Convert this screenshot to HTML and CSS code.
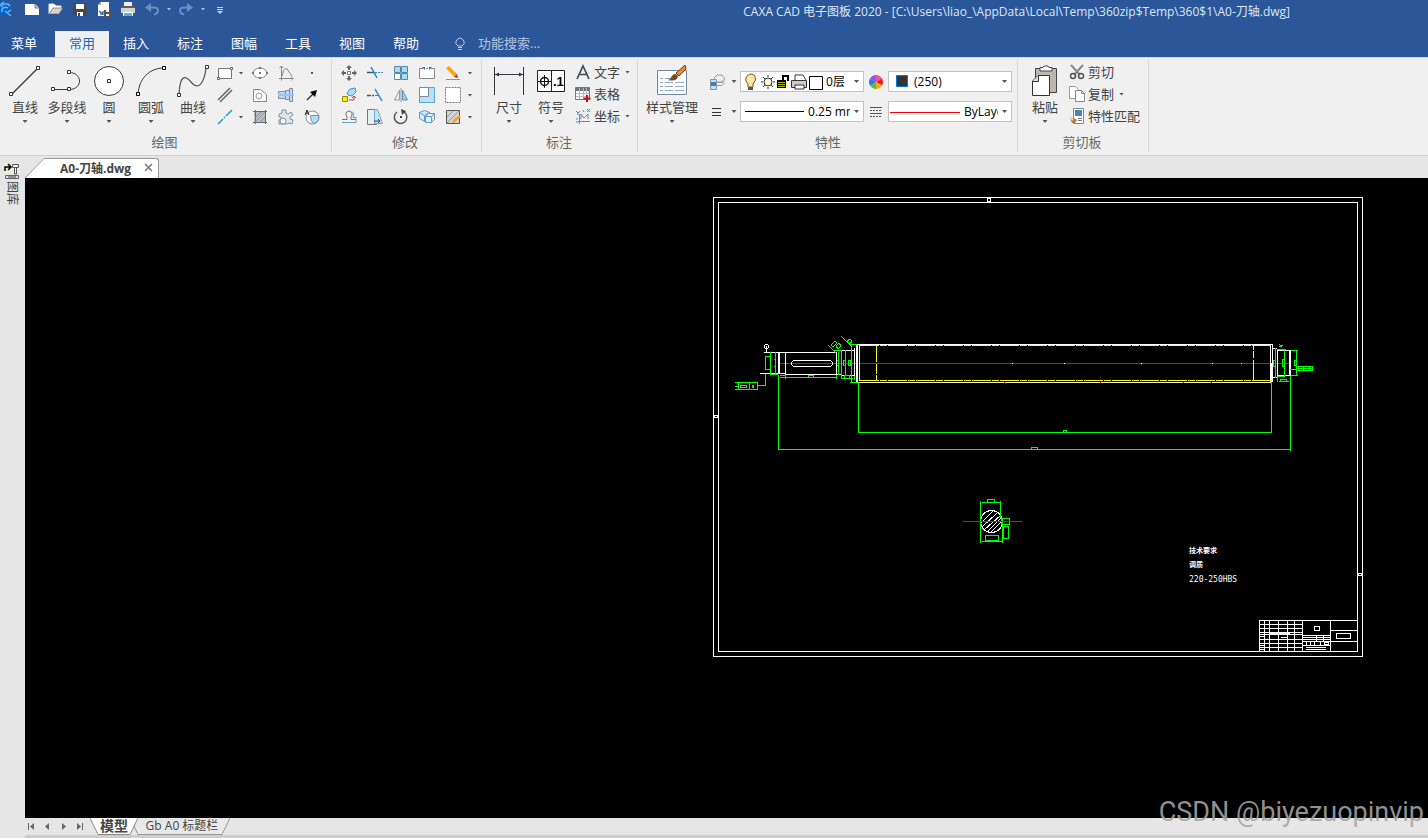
FILE: index.html
```html
<!DOCTYPE html>
<html lang="zh-CN">
<head>
    <meta charset="UTF-8">
    <meta name="viewport" content="width=device-width, initial-scale=1.0">
    <title>CAXA CAD 电子图板 2020</title>
    <link rel="stylesheet" href="styles.css">
</head>
<body>
    <header class="top">
        <div class="titlebar">
            <div class="quick">
                <svg class="logo" width="12" height="18" viewBox="0 0 12 18"><path d="M0 3l3-1 5 1 3 3-1 6-4 3H0z" fill="#0c62c4"/><path d="M1 7c2-4 7-4 9-1M2 12c-1-4 3-6 6-4M5 11l6 5M0 5l4-3M8 12l3-2" stroke="#5fb8ff" stroke-width="1.5" fill="none"/></svg>
                <button class="q q-new" aria-label="新建"><svg width="16" height="16"><path d="M1 3h10l4 4v7H1z" fill="#fff"/><path d="M11 3v4h4" fill="#ccc" stroke="#777"/></svg></button>
                <button class="q" aria-label="打开"><svg width="16" height="16"><path d="M1 13V3h5l2 2h5v3" fill="#fff" stroke="#eee"/><path d="M1 13l4-6h10l-4 6z" fill="#d8d4cc" stroke="#555" stroke-width=".6"/></svg></button>
                <button class="q" aria-label="保存"><svg width="16" height="16"><path d="M1 2h14v13H1z" fill="#46484c"/><path d="M4 3h8v5H4zM5 11h6v4H5z" fill="#fff"/><path d="M6 12h2v3H6z" fill="#444"/></svg></button>
                <button class="q" aria-label="另存"><svg width="16" height="16"><path d="M5 1h8v14H2V4z" fill="#fff"/><path d="M2 4l3-3v3z" fill="#aaa"/><path d="M3 10l4 3M4 13h3v-3" stroke="#2878bc" stroke-width="1.5" fill="none"/><path d="M8 9h7v7H8z" fill="#555"/><path d="M10 9h3v2h-3zM10 13h3v2h-3z" fill="#eee"/></svg></button>
                <button class="q" aria-label="打印"><svg width="16" height="16"><path d="M4 1h8v4H4z" fill="#eee"/><path d="M1 5h14v7H1z" fill="#5d5d5f"/><path d="M1 7h14v5H1z" fill="#d6d2ca"/><path d="M3 11h10v4H3z" fill="#fff"/><path d="M4 12h8v3H4z" fill="#3fbbe0"/></svg></button>
                <button class="q" aria-label="撤销"><svg width="16" height="16"><path d="M3 6.500h7q4 0 4 3t-4 4" stroke="#6d8fc2" stroke-width="2" fill="none"/><path d="M1 6.500L7 2v9z" fill="#6d8fc2"/></svg></button>
                <button class="drop light" aria-label="撤销列表"></button>
                <button class="q" aria-label="重做"><svg width="16" height="16"><path d="M13 6.500H6q-4 0-4 3t4 4" stroke="#6d8fc2" stroke-width="2" fill="none"/><path d="M15 6.500L9 2v9z" fill="#6d8fc2"/></svg></button>
                <button class="drop light" aria-label="重做列表"></button>
                <button class="q custom" aria-label="自定义"><svg width="16" height="16"><path d="M5 6.500h6M5 8.500h6" stroke="#ccd6e8"/><path d="M5 10h6l-3 3z" fill="#ccd6e8"/></svg></button>
            </div>
            <h1 class="title">CAXA CAD 电子图板 2020 - [C:\Users\liao_\AppData\Local\Temp\360zip$Temp\360$1\A0-刀轴.dwg]</h1>
        </div>
        <nav class="tabs">
            <button class="tab menu">菜单</button>
            <button class="tab active">常用</button>
            <button class="tab">插入</button>
            <button class="tab">标注</button>
            <button class="tab">图幅</button>
            <button class="tab">工具</button>
            <button class="tab">视图</button>
            <button class="tab">帮助</button>
            <label class="search"><svg width="12" height="14"><path d="M4 9Q1 7 2 4q2-3 4-3t4 3q1 3-2 5z" fill="none" stroke="#b9c8e2"/><path d="M4 10.500h4M4 12.500h4" stroke="#b9c8e2"/></svg><input type="text" placeholder="功能搜索..." aria-label="功能搜索"></label>
        </nav>
    </header>

    <section class="ribbon">
        <div class="group">
            <div class="body">
                <button class="big"><svg width="32" height="32"><path d="M3 29L29 3" stroke="#3c4046" stroke-width="1.500"/><path d="M.5 27.500h3v3h-3zM27.500 1.500h3v3h-3z" fill="#fff" stroke="#333"/></svg><span>直线</span><i class="arrow"></i></button>
                <button class="big"><svg width="32" height="32"><path d="M3 24.500h15c14 0 14-17 0-17" stroke="#333845" fill="none"/><path d="M.5 22.500h3v3h-3zM16.500 22.500h3v3h-3zM16.500 5.500h3v3h-3z" fill="#fff" stroke="#333"/></svg><span>多段线</span><i class="arrow"></i></button>
                <button class="big"><svg width="32" height="32"><circle cx="16" cy="16" r="14.500" fill="#fff" stroke="#333845"/><path d="M14.500 14.500h3v3h-3z" fill="#fff" stroke="#333"/></svg><span>圆</span><i class="arrow"></i></button>
                <button class="big"><svg width="32" height="32"><path d="M3 29C4 14 14 3 29 3" stroke="#333845" fill="none"/><path d="M1.500 27.500h3v3h-3zM27.500 1.500h3v3h-3z" fill="#fff" stroke="#000"/></svg><span>圆弧</span><i class="arrow"></i></button>
                <button class="big"><svg width="32" height="32"><path d="M2 29C3 8 9 11 14 17C21 26 27 19 29 3" stroke="#555b63" stroke-width="1.300" fill="none"/><path d="M.5 28.500h3v3h-3zM28.500.5h3v3h-3z" fill="#fff" stroke="#333"/></svg><span>曲线</span><i class="arrow"></i></button>
                <div class="tools draw">
                    <button aria-label="矩形"><svg width="16" height="16"><path d="M1.500 3.500h13v10h-13z" fill="#fff" stroke="#777"/><path d="M.5 12.500h2v2h-2zM13.500 2.500h2v2h-2z" fill="#fff" stroke="#666"/></svg></button><button class="drop" aria-label="矩形选项"></button>
                    <button aria-label="椭圆"><svg width="16" height="16"><ellipse cx="8" cy="8" rx="7" ry="5" fill="#fff" stroke="#888"/><path d="M7 2h2v2H7zM7 12h2v2H7zM0 7h2v2H0zM14 7h2v2h-2zM7 7h2v2H7z" fill="#777"/></svg></button>
                    <button aria-label="公式曲线"><svg width="16" height="16"><path d="M3.500 1v14.500M1 13.500h14M1.500 3l2-2 2 2M13 11.500l2 2-2 2M4 11q3-13 7-4l3 4" fill="none" stroke="#888"/></svg></button>
                    <button aria-label="点"><svg width="16" height="16"><path d="M7 7h2v2H7z" fill="#555"/></svg></button>
                    <button aria-label="平行线"><svg width="16" height="16"><path d="M1 13L13 1M3 15L15 3" stroke="#666" stroke-width="1.500"/></svg></button><span></span>
                    <button aria-label="轮廓"><svg width="16" height="16"><path d="M1.500 14.500v-12h7l6 5v7z" fill="#fff" stroke="#888"/><circle cx="7" cy="9" r="3" fill="none" stroke="#999"/></svg></button>
                    <button aria-label="孔轴"><svg width="16" height="16"><path d="M.5 4.500h7v7h-7zM7.500 3.500h4v9h-4zM11.500 1.500h3v13h-3z" fill="#c5d5e6" stroke="#7a90a8"/><path d="M0 8h16" stroke="#eaf5ff" stroke-width="2"/><path d="M0 8h16" stroke="#369bdf"/></svg></button>
                    <button aria-label="箭头"><svg width="16" height="16"><path d="M3 13L9 7" stroke="#333" stroke-width="1.500"/><path d="M13 3l-2 7-5-5z"/></svg></button>
                    <button aria-label="中心线"><svg width="16" height="16"><path d="M1 15L6 10M7 9l1-1M9 7l6-6" stroke="#199ada" stroke-width="1.500"/></svg></button><button class="drop" aria-label="中心线选项"></button>
                    <button aria-label="剖面线"><svg width="16" height="16"><path d="M2 3h12v11H2z" fill="#b8bdc1"/><path d="M3.500 1v14M13.500 1v14M1 2.500h14M1 13.500h14" stroke="#606870"/><path d="M3 9l6-6M3 13L13 3M8 13l5-5" stroke="#8b9298" fill="none"/></svg></button>
                    <button aria-label="齿轮"><svg width="16" height="16"><path d="M4 1h4v3l2 1 3-2 2 3-3 2v2l3 1-1 4-3-1-2 1H1v-4l2-1v-2L1 8V5l3-1z" fill="#dbe6ed" stroke="#8291a0"/><circle cx="5" cy="12" r="3" fill="#fff" stroke="#8291a0"/></svg></button>
                    <button aria-label="局部放大"><svg width="16" height="16"><circle cx="8.500" cy="8.500" r="6.500" fill="#f9f9f9" stroke="#888"/><path d="M6.500 6.500h8q1 7-5 8-3-2-3-8z" fill="#aee0fa" stroke="#7890a0"/><path d="M1 6l2-5 2 5M2 4h2" fill="none" stroke="#222"/></svg></button>
                </div>
            </div>
            <div class="caption">绘图</div>
        </div>

        <div class="group modify-group">
            <div class="body">
                <div class="tools modify">
                    <button aria-label="平移"><svg width="16" height="16"><path d="M8 0l3 3H9v2H7V3H5zM8 16l3-3H9v-2H7v2H5zM0 8l3-3v2h2v2H3v2zM16 8l-3-3v2h-2v2h2v2z" fill="#666"/><path d="M6.500 6.500h3v3h-3z" fill="#fff" stroke="#777"/></svg></button>
                    <button aria-label="裁剪"><svg width="16" height="16"><path d="M0 7.500h7" stroke="#555" stroke-width="1.500"/><path d="M8 7.500h8" stroke="#2d8bd0" stroke-dasharray="2 1"/><path d="M4 2l6 11" stroke="#1685d1" stroke-width="1.500"/></svg></button>
                    <button aria-label="阵列"><svg width="16" height="16"><path d="M1.500 1.500h6v6h-6zM8.500 1.500h6v6h-6zM8.500 8.500h6v6h-6z" fill="#a5dcf7" stroke="#5b87a6"/><path d="M1.500 8.500h6v6h-6z" fill="#fff" stroke="#5b87a6"/></svg></button>
                    <button aria-label="打断"><svg width="16" height="16"><path d="M4 3.500H.5v10h15v-10H12M7 3.500h2" fill="#fff" stroke="#888"/><path d="M3 2h3v3zM13 2h-3v3z" fill="#1974b9"/></svg></button>
                    <button aria-label="删除"><svg width="16" height="16"><path d="M1 3l3-2 8 8-3 3z" fill="#f3a51d"/><path d="M9 12l3-3 1 4z" fill="#884a14"/><path d="M2 5l6 6" stroke="#fff0aa"/><path d="M1 14.500h14" stroke="#a58e80"/></svg></button><button class="drop" aria-label="删除选项"></button>
                    <button aria-label="复制对象"><svg width="16" height="16"><path d="M1.500 9.500h5v5h-5z" fill="#ffe900" stroke="#998c00"/><path d="M6 6l3-4 5-1 1 4-4 4-4-1z" fill="#abdafa" stroke="#4b91bf"/><path d="M8 13h5v-3M11 11l2-2 2 2" fill="none" stroke="#b34b44"/></svg></button>
                    <button aria-label="延伸"><svg width="16" height="16"><path d="M0 8.500h4M5 8.500h2" stroke="#555" stroke-width="1.500"/><path d="M8 8.500h4" stroke="#2584c3"/><path d="M8 2l7 12" stroke="#3b93cf" stroke-width="1.500"/></svg></button>
                    <button aria-label="镜像"><svg width="16" height="16"><path d="M6.500 3v10h-5z" fill="#eee" stroke="#999"/><path d="M9.500 3v10h5z" fill="#9ccfeb" stroke="#5f94b5"/><path d="M8 1v14" stroke="#999"/></svg></button>
                    <button aria-label="缩放"><svg width="16" height="16"><path d="M.5.5h15v15H.5z" fill="#b7e1f7" stroke="#5fa5cc"/><path d="M.5.5h9v9h-9z" fill="#fff" stroke="#888"/></svg></button>
                    <button aria-label="拉伸"><svg width="16" height="16"><path d="M.5.5h15v15H.5z" fill="#fff" stroke="#777" stroke-dasharray="2 1"/></svg></button><button class="drop" aria-label="拉伸选项"></button>
                    <button aria-label="等距线"><svg width="16" height="16"><path d="M1 10.500h5V8Q3 3 8 2q5 1 2 6v2.500h5" fill="none" stroke="#777"/><path d="M1 13.500h14V8.500h-3q2-4-1-6" fill="none" stroke="#65a0c8"/></svg></button>
                    <button aria-label="拔模"><svg width="16" height="16"><path d="M.5.500h9v15h-9z" fill="#e8edf0" stroke="#777"/><path d="M7.500.500h3l5 14h-8z" fill="#bde5fa" stroke="#74a9c7"/><path d="M7 12h6M11 10l2 2-2 2" fill="none" stroke="#444"/></svg></button>
                    <button aria-label="旋转"><svg width="16" height="16"><path d="M9 2a6.300 6.300 0 1 1-5 1" fill="none" stroke="#555" stroke-width="1.500"/><path d="M8 0l5 2-4 4z" fill="#444"/><circle cx="8" cy="8" r="1"/></svg></button>
                    <button aria-label="块"><svg width="16" height="16"><path d="M.5 3.500l5-2 5 2v6l-5 3-5-3z" fill="#d3edfb" stroke="#5a9dc4"/><path d="M.5 3.500l5 3 5-3M5.500 6.500v6" fill="none" stroke="#5a9dc4"/><path d="M6.500 7.500h6v6h-6zM6.500 7.500l3-3h6l-3 3M15.500 4.500v6l-3 3" fill="#def3fe" stroke="#5a9dc4"/></svg></button>
                    <button aria-label="填充编辑"><svg width="16" height="16"><path d="M1.500 1.500h13v13h-13z" fill="#d2d3d4" stroke="#555"/><path d="M2 8l6-6M2 14L14 2M8 14l6-6" stroke="#999"/><path d="M8 11l6-5 2 2-6 5-3 1z" fill="#efa52b"/></svg></button><button class="drop" aria-label="填充选项"></button>
                </div>
            </div>
            <div class="caption">修改</div>
        </div>

        <div class="group notes">
            <div class="body">
                <button class="big"><svg width="32" height="32"><path d="M1.500 2v28M30.500 2v28M2 9.500h28" stroke="#333845"/><path d="M2 9.500l4-2v4zM30 9.500l-4-2v4z" fill="#333845"/></svg><span>尺寸</span><i class="arrow"></i></button>
                <button class="big"><svg width="32" height="32"><path d="M2.500 5.500h27v21h-27zM16.500 5.500v21" fill="#fff" stroke="#222"/><circle cx="9.500" cy="16.500" r="4" fill="none" stroke="#111" stroke-width="1.500"/><path d="M9.500 10v13M3 16.500h13" stroke="#111"/><text class="icon-number" x="18" y="21">.1</text></svg><span>符号</span><i class="arrow"></i></button>
                <div class="rows">
                    <button class="row"><svg width="16" height="16"><path d="M2 15L8 2l6 13M4 10.500h8" fill="none" stroke="#444b51" stroke-width="1.700"/></svg>文字<i class="arrow"></i></button>
                    <button class="row"><svg width="16" height="16"><path d="M.5 1.500h14v12H.5z" fill="#fff" stroke="#777"/><path d="M1 2h13v3H1z" fill="#6b737a"/><path d="M1 7.500h13M1 10.500h13M4.500 2v11M8.500 2v11M11.500 2v11" stroke="#bbb"/><path d="M12 9v7M8.500 12.500h7" stroke="#c40d1f" stroke-width="2"/></svg>表格</button>
                    <button class="row"><svg width="16" height="16"><path d="M4.500 6v10M3 13.500h12M6 11V6l3 4 4-4v5" fill="none" stroke="#7b858c"/><path d="M1 3l2 2 2-2M3 5v2M12 1l3 3M15 1l-3 3M1 11h2M1 14h2M8 2l1 2" fill="none" stroke="#3b92d0"/></svg>坐标<i class="arrow"></i></button>
                </div>
            </div>
            <div class="caption">标注</div>
        </div>

        <div class="group properties">
            <div class="body">
                <button class="big wide"><svg width="32" height="32"><path d="M1.500 5.500h29v24h-29z" fill="#fff" stroke="#718ba5"/><path d="M4 13.500h3M4 17.500h3M4 21.500h3M4 25.500h3M9 13.500h6M9 17.500h8M9 21.500h8M9 25.500h8M19 17.500h9M19 21.500h9M19 25.500h9" stroke="#8aabc9"/><path d="M20 8L29 0l1 4-7 7z" fill="#e48d36" stroke="#774018"/><path d="M12 15q3-1 4-4 3-4 6 0-1 6-10 4z" fill="#7d4517"/></svg><span>样式管理</span><i class="arrow"></i></button>
                <div class="props">
                    <button aria-label="图层"><svg width="16" height="16"><path d="M5 4l3-3h5l3 4-4 3H8zM8 8.500h6l2-2M8 11.500h5l3-3" fill="#eee" stroke="#9a9da0"/><path d="M1.500 5.500h6v10h-6z" fill="#cbdceb" stroke="#8497aa"/><path d="M2 8h5v4H2z" fill="#3f7fb3"/></svg></button><button class="drop" aria-label="图层选项"></button>
                    <div class="combo"><svg width="82" height="19"><path d="M7 12Q3 8 6 4q4-4 8 0 2 4-2 8v3H7z" fill="#ffe9a0" stroke="#665e38"/><path d="M7 15h5v3H7z" fill="#555"/><circle cx="27" cy="10" r="4" fill="#fff5da" stroke="#333"/><path d="M27 3v2M27 15v2M20 10h2M32 10h2M22 5l2 2M30 13l2 2M32 5l-2 2M22 15l2-2" stroke="#333"/><path d="M36 8h9v8h-9z"/><path d="M37 10.500h7M37 12.500h7M37 14.500h7" stroke="#b5b400"/><path d="M42 8V4h5v5" fill="none" stroke="#000" stroke-width="2"/><path d="M54 8V3h8l3 5" fill="#fff" stroke="#333"/><path d="M50.500 8.500h15v7h-15z" fill="#ccc" stroke="#333"/><path d="M54 13h9v4h-9z" fill="#fff" stroke="#333"/><path d="M68.500 4.500h13v13h-13z" fill="#fff" stroke="#000"/></svg><select aria-label="图层"><option>0层</option></select><i class="arrow"></i></div>
                    <button aria-label="颜色"><svg width="16" height="16"><path d="M8 8L8 1a7 7 0 0 1 6 3.500z" fill="#f0529a"/><path d="M8 8l6-3.500a7 7 0 0 1 0 7z" fill="#f01c1c"/><path d="M8 8l6 3.500A7 7 0 0 1 8 15z" fill="#f5a91c"/><path d="M8 8v7a7 7 0 0 1-6-3.500z" fill="#51c82c"/><path d="M8 8l-6 3.500a7 7 0 0 1 0-7z" fill="#2477e8"/><path d="M8 8L2 4.500A7 7 0 0 1 8 1z" fill="#9155e8"/></svg></button>
                    <div class="combo"><svg width="22" height="19"><path d="M7.500 3.500h11v11h-11z" fill="#333" stroke="#0078d7"/></svg><select aria-label="颜色"><option>(250)</option></select><i class="arrow"></i></div>
                    <button aria-label="线宽"><svg width="16" height="16"><path d="M3 4.500h9M3 8.500h9M3 11.500h9" stroke="#333"/></svg></button><button class="drop" aria-label="线宽选项"></button>
                    <div class="combo"><svg width="64" height="19"><path d="M4 9.500h59" stroke="#000"/></svg><select aria-label="线宽"><option>0.25 mm</option></select><i class="arrow"></i></div>
                    <button aria-label="线型"><svg width="16" height="16"><path d="M2 3.500h12M2 9.500h12" stroke="#555"/><path d="M2 6.500h12M2 12.500h12" stroke="#555" stroke-dasharray="2 1"/></svg></button>
                    <div class="combo"><svg width="72" height="19"><path d="M1 10.500h70" stroke="red"/></svg><select aria-label="线型"><option>ByLayer</option></select><i class="arrow"></i></div>
                </div>
            </div>
            <div class="caption">特性</div>
        </div>

        <div class="group clipboard">
            <div class="body">
                <button class="big"><svg width="32" height="32"><path d="M6.500 3.500h21v24h-21z" fill="#beb6aa" stroke="#444"/><path d="M11 6V2.500h3L15 1h4l1 1.500h3V6z" fill="#fff" stroke="#444"/><path d="M9 10.500h11.500v20h-17V16z" fill="#fff" stroke="#333"/><path d="M3.500 16.500h6v-6" fill="#ddd" stroke="#333"/></svg><span>粘贴</span><i class="arrow"></i></button>
                <div class="rows">
                    <button class="row"><svg width="16" height="16"><path d="M2 1l9 10M14 1L5 11" stroke="#888" stroke-width="2"/><circle cx="4" cy="12" r="2.500" fill="none" stroke="#555" stroke-width="1.500"/><circle cx="12" cy="12" r="2.500" fill="none" stroke="#555" stroke-width="1.500"/></svg>剪切</button>
                    <button class="row"><svg width="16" height="16"><path d="M.5.500h6l3 3v9h-9z" fill="#fff" stroke="#999"/><path d="M6.500 4.500h6l3 3v8h-9z" fill="#fff" stroke="#888"/><path d="M12.500 4.500v3h3" fill="none" stroke="#888"/></svg>复制<i class="arrow"></i></button>
                    <button class="row"><svg width="16" height="16"><path d="M4.500.500h10v15h-10z" fill="#fff" stroke="#888"/><path d="M6 2h7v6H6z" fill="#4a84b6"/><path d="M9 10.500h4M9 12.500h4" stroke="#777"/><path d="M1 10h4l3 2-2 3H3z" fill="#b8793a"/><path d="M1 9l3 3" stroke="#ddd" stroke-width="2"/></svg>特性匹配</button>
                </div>
            </div>
            <div class="caption">剪切板</div>
        </div>
    </section>

    <main class="work">
        <aside class="side">
            <button class="library"><svg width="16" height="18"><path d="M0 0h16v10H0z" fill="#eeefd6"/><path d="M1 8V4h5M4 1l3 3-3 3" fill="none" stroke="#000" stroke-width="1.500"/><path d="M8.500 1.500h6v3h-6zM10.500 5v6h2V5" fill="#eee" stroke="#555"/><path d="M1.500 12.500h13v3h-13z" fill="#ddd" stroke="#666"/><path d="M4 14h8" stroke="#444"/></svg><span>图库</span></button>
        </aside>
        <div class="document">
            <div class="filetabs">
                <svg width="20" height="20"><path d="M0 20L19 .500h1V20z" fill="#fff"/><path d="M0 20L19 .500h1" fill="none" stroke="#999"/></svg>
                <div class="filetab"><span>A0-刀轴.dwg</span><button aria-label="关闭"><svg width="9" height="9"><path d="M1 1l7 7M8 1L1 8" stroke="#777" stroke-width="1.500"/></svg></button></div>
            </div>
            <div class="canvas">
                <svg class="drawing" viewBox="25 178 1403 640" preserveAspectRatio="xMinYMin meet" shape-rendering="crispEdges">
                    <!-- sheet frame -->
                    <g class="white">
                        <path d="M713.500 197.500h649v459h-649zM718.500 202.500h639v449h-639z"/>
                        <path d="M987.500 198.500h3v3h-3zM714.500 415.500h3v2h-3zM1358.500 573.500h3v2h-3z"/>
                    </g>
                    <!-- shaft -->
                    <path class="red" d="M779 363.500h512"/>
                    <g class="white">
                        <path d="M765 344.500h3M764.500 345v3M768.500 345v3M765 348.500h3M766.500 346v6M764 352.500h73M760 373.500h25M785 374.500h56M778.500 352v22M779.500 352v22M785.500 352v22M836.500 352v22"/>
                        <path d="M793 360.500h38M793 366.500h38M792.500 361v1M791.500 362v3M792.500 365v1M831.500 361v1M832.500 362v3M831.500 365v1"/>
                        <path d="M841 350.500h13M841 375.500h13M854.500 348v29M856.500 344v38M857.500 344v38M857 344.500h415M857 382.500h415M1270.500 344v38M1272.500 344v38M1271.500 363v19M1273 348.500h4M1273 377.500h4M1277.500 350v25M1277 350.500h13M1277 375.500h13M1289.500 350v26M1290.500 350v26"/>
                        <path d="M1012 363.500h1M1064 363.500h1M1141 363.500h1M1212 363.500h1M1241 363.500h1"/>
                    </g>
                    <g class="yellow">
                        <path d="M859.500 345v36M876.500 345v17M876.500 364v10M876.500 375v5M1253.500 345v5M1253.500 351v7M1253.500 360v20"/>
                        <path d="M860 345.500h411M860 380.500h411" stroke-dasharray="19 1 7 1"/>
                    </g>
                    <path class="red" d="M1004 382.500h1M1100 382.500h1M1183 382.500h1M1211 382.500h1"/>
                    <g class="green">
                        <path d="M765.500 356.500h5v13h-5zM770.500 352v22M775.500 352v22M773.500 359.500h2v7h-2M770 374.500h8M778.500 375v75M780 377.500h56M779.500 375.500h6v3M808.500 375.500h5v2h-5z"/>
                        <path d="M765.500 374v11.500H757M738.500 382.500h19v7h-19zM735 382.500h3M735 389.500h3M735 386.500h3M740.500 385.500h6v2h-6zM749.500 382v7M752.500 385.500h1v2h-1z"/>
                        <path d="M836.500 375v4M838.500 352v23M841.500 350v29M845.500 350v26M851.500 344v34M836.500 360.500h2v5h-2M843.500 360.500h2v5h-2zM848.500 360.500h2v5h-2zM841 378.500h12M844.500 375.500h5v3h-5zM850 344.500h7M850 382.500h7M851.500 379v3M854.500 376v4M834 350.500h7"/>
                        <path d="M828 345l8 8M841 336l11 11M831 345l2 2 4-4-2-2zM836 346l2 3 3-3-2-3zM847 341l3 3 2-3-2-2z"/>
                        <path d="M858.500 382v51M1271.500 382v51M858 432.500h414M779 449.500h512M1290.500 376v75M1063.500 430.500h3v2h-3zM1031.500 447.500h6v2h-6z"/>
                        <path d="M1275.500 348v30M1273.500 360.500h2v6h-2zM1284.500 350v26M1282.500 359.500h2v7h-2zM1277 349.500h9M1279 347l4-2M1279 344l3 3M1291 350.500h7M1291 375.500h7M1296.500 350v25M1294.500 360.500h2v5h-2zM1290 369.500h7M1297 366.500h16M1297 368.500h16M1297 370.500h16M1298.500 366v5M1303.500 367v4M1309.500 367v4M1312.500 366v5M1277.500 376v6M1277 376.500h8M1279 381.500h10M1280.500 379.500h6v2h-6z"/>
                    </g>
                    <!-- section -->
                    <g class="white">
                        <circle cx="991.500" cy="521.500" r="11"/>
                        <path d="M981 523l12-12M982 527l15-14M984 530l16-14M987 532l15-15M991 532l11-11"/>
                    </g>
                    <g class="green">
                        <path d="M980.500 501v42M1000.500 501v17M982 502.500h19M987.500 499.500h7v3h-7zM982 541.500h21M985.500 535.500h13v5h-13zM1002.500 518v25M1001.500 518.500h8v6h-8zM1003.500 526.500h5v12h-5z"/>
                    </g>
                    <path class="red" d="M963 521.500h59"/>
                    <!-- notes and title block -->
                    <text class="note" x="1189" y="553">技术要求</text>
                    <text class="note" x="1189" y="567">调质</text>
                    <text class="note latin" x="1189" y="582">220-250HBS</text>
                    <g class="white">
                        <path d="M1357 620.500h-97.500V651M1264.500 620v31M1269.500 620v31M1278.500 620v31M1287.500 620v31M1294.500 620v31M1302.500 620v31M1259 624.500h43M1259 628.500h43M1259 632.500h43M1259 634.500h43M1259 639.500h43M1259 643.500h43M1259 647.500h43M1330.500 620v31M1330 630.500h27M1330 641.500h27"/>
                        <path d="M1259 636.500h6M1259 645.500h6M1259 649.500h6M1270 633.500h20M1281 637.500h6M1302 635.500h28M1302 637.500h28M1302 639.500h28M1302 641.500h28M1302 645.500h28M1306 647.500h20M1306 649.500h20M1316.500 636v5M1323.500 636v5M1306.500 642v4M1310.500 642v4M1314.500 642v4M1320.500 642v4M1324.500 642.500h4v2h-4zM1314.500 626.500h5v4h-5zM1336.500 633.500h14v5h-14z"/>
                    </g>
                </svg>
            </div>
            <div class="sheets">
                <button class="nav" aria-label="第一页"><svg width="9" height="9"><path d="M1.500 1v7" stroke="#666"/><path d="M7 1v7L3 4.500z" fill="#666"/></svg></button>
                <button class="nav" aria-label="上一页"><svg width="9" height="9"><path d="M6 1v7L2 4.500z" fill="#666"/></svg></button>
                <button class="nav" aria-label="下一页"><svg width="9" height="9"><path d="M3 1v7l4-3.500z" fill="#666"/></svg></button>
                <button class="nav" aria-label="最后一页"><svg width="9" height="9"><path d="M7.500 1v7" stroke="#666"/><path d="M2 1v7l4-3.500z" fill="#666"/></svg></button>
                <button class="sheet current"><svg viewBox="0 0 48 17" preserveAspectRatio="none"><path d="M0 0l8 16.500h32L48 0" fill="#fff" stroke="#888"/></svg><span>模型</span></button>
                <button class="sheet second"><svg viewBox="0 0 96 17" preserveAspectRatio="none"><path d="M0 8l4 8.500h84L96 0" fill="#e9e9e9" stroke="#999"/></svg><span>Gb A0 标题栏</span></button>
            </div>
        </div>
    </main>
    <div class="watermark">CSDN @biyezuopinvip</div>
</body>
</html>
```

FILE: styles.css
```css
* {
    box-sizing: border-box;
}

body {
    display: flex;
    flex-direction: column;
    min-height: 100vh;
    margin: 0;
    background: #e6e6e6;
    color: #444;
    font-family: "Open Sans", "Noto Sans CJK SC", sans-serif;
    font-size: 13px;
    position: relative;
}

button {
    margin: 0;
    padding: 0;
    border: 0;
    background: none;
    color: inherit;
    font: inherit;
}

svg {
    display: block;
    flex: none;
}

/* title bar and tabs */
.top {
    background: #2b579a;
    border-bottom: 1px solid #d5d5d5;
}

.titlebar {
    display: flex;
    height: 31px;
    justify-content: space-between;
    padding-right: 138px;
}

.quick {
    display: flex;
    align-items: center;
    height: 18px;
}

.q {
    width: 24px;
    display: flex;
    justify-content: center;
}

.q-new {
    margin-left: 8px;
}

.title {
    margin: 0;
    color: #dde6f3;
    font-size: 12px;
    font-weight: normal;
    line-height: 24px;
    white-space: nowrap;
}

.tabs {
    display: flex;
    height: 26px;
}

.tab {
    width: 54px;
    padding-bottom: 3px;
    color: #fff;
    line-height: 22px;
}

.menu {
    width: 48px;
    margin-right: 7px;
}

.tab.active {
    background: #f0f0f0;
    color: #2068b0;
}

.search {
    display: flex;
    align-items: center;
    margin-left: 21px;
    gap: 12px;
}

.search input {
    width: 120px;
    padding: 0 0 3px;
    border: 0;
    background: none;
    font: inherit;
    line-height: 22px;
}

.search input::placeholder {
    color: #b5c5e0;
}

/* ribbon */
.ribbon {
    display: flex;
    padding: 2px 0 3px;
    background: #f0f0f0;
    border-bottom: 1px solid #d0d0d0;
}

.group {
    display: flex;
    flex-direction: column;
    padding: 1px 6px 0 4px;
    border-right: 1px solid #d6d6d6;
}

.group.modify-group {
    padding-right: 7px;
}

.group.notes {
    padding: 1px 7px 0 6px;
}

.group.properties {
    padding: 1px 5px 0 6px;
}

.group.clipboard {
    padding: 1px 8px 0 6px;
}

.body {
    display: flex;
    height: 71px;
}

.caption {
    height: 20px;
    color: #666;
    line-height: 20px;
    text-align: center;
}

.big {
    display: flex;
    width: 42px;
    flex-direction: column;
    align-items: center;
    padding-top: 4px;
    white-space: nowrap;
}

.big span {
    line-height: 20px;
}

.wide {
    width: 56px;
}

.arrow {
    flex: none;
    width: 5px;
    height: 3px;
    background: #555;
    clip-path: polygon(0 0, 100% 0, 50% 100%);
}

.big .arrow {
    margin-top: 3px;
}

.icon-number {
    font: bold 13px "Liberation Sans", sans-serif;
}

.tools {
    display: grid;
    grid-template-rows: repeat(3, 22px);
    padding-top: 1px;
}

.draw {
    grid-template-columns: 20px 12px repeat(3, 26px);
    margin-left: 1px;
}

.modify {
    grid-template-columns: repeat(5, 26px) 8px;
}

.tools button,
.props button {
    display: flex;
    align-items: center;
    justify-content: center;
}

.drop {
    display: flex;
    width: 10px;
    align-items: center;
    justify-content: center;
}

.tools .drop,
.props .drop {
    width: auto;
}

.drop::before {
    width: 5px;
    height: 3px;
    background: #555;
    clip-path: polygon(0 0, 100% 0, 50% 100%);
    content: "";
}

.light::before {
    background: #a8b9d5;
}

.rows {
    display: flex;
    flex-direction: column;
    padding-left: 3px;
}

.row {
    display: flex;
    height: 22px;
    align-items: center;
    gap: 3px;
    line-height: 22px;
    white-space: nowrap;
}

.row .arrow {
    margin-left: 2px;
}

.props {
    display: grid;
    grid-template-columns: 22px 12px 124px 24px 124px;
    grid-template-rows: 21px 21px;
    row-gap: 9px;
    margin-left: 6px;
    padding-top: 10px;
}

.combo {
    display: flex;
    align-items: center;
    padding-right: 4px;
    overflow: hidden;
    border: 1px solid #c3c3c3;
    background: #fff;
}

.combo select {
    flex: 1;
    width: 0;
    min-width: 0;
    height: 19px;
    margin: 0 4px 0 3px;
    padding: 0;
    overflow: hidden;
    border: 0;
    appearance: none;
    background: none;
    color: #000;
    font-family: inherit;
    font-size: 12px;
    text-overflow: clip;
}

/* workspace */
.work {
    display: flex;
    flex: 1;
}

.side {
    width: 25px;
    padding: 7px 4px;
}

.library span {
    display: block;
    font-size: 12px;
    line-height: 16px;
    text-orientation: sideways;
    writing-mode: vertical-rl;
}

.document {
    display: flex;
    flex: 1;
    min-width: 0;
    flex-direction: column;
}

.filetabs {
    display: flex;
    height: 22px;
    padding-top: 2px;
}

.filetab {
    display: flex;
    align-items: center;
    gap: 13px;
    padding: 0 5px 2px 15px;
    border: 1px solid #999;
    border-width: 1px 1px 0 0;
    border-radius: 0 3px 0 0;
    background: #fff;
    font-size: 12px;
    font-weight: bold;
}

.canvas {
    flex: 1;
    overflow: hidden;
    background: #000;
}

.drawing {
    width: 100%;
}

.drawing path,
.drawing circle {
    fill: none;
}

.white {
    stroke: #fff;
}

.green {
    stroke: #0f0;
}

.yellow {
    stroke: #ff0;
}

.red {
    stroke: #f00;
}

.note {
    fill: #fff;
    font-family: "Noto Sans CJK SC", sans-serif;
    font-size: 7px;
    font-weight: bold;
}

.note.latin {
    font-family: "DejaVu Sans Mono", monospace;
    font-size: 8px;
    font-weight: normal;
}

/* sheet tabs */
.sheets {
    display: flex;
    height: 20px;
    border-bottom: 3px solid #cdcdcd;
}

.nav {
    display: flex;
    width: 16px;
    align-items: center;
    padding-left: 2px;
}

.sheet {
    display: grid;
    height: 17px;
    line-height: 15px;
    white-space: nowrap;
}

.sheet svg,
.sheet span {
    grid-area: 1 / 1;
}

.sheet svg {
    width: 100%;
    height: 17px;
}

.current {
    width: 48px;
    margin-left: 1px;
    font-size: 14px;
    font-weight: bold;
}

.second {
    width: 96px;
    margin-left: -4px;
    font-size: 12px;
}

.watermark {
    position: absolute;
    right: 4px;
    bottom: 10px;
    color: rgba(165, 165, 165, .9);
    font-family: Roboto, sans-serif;
    font-size: 27px;
    line-height: 32px;
}
```
